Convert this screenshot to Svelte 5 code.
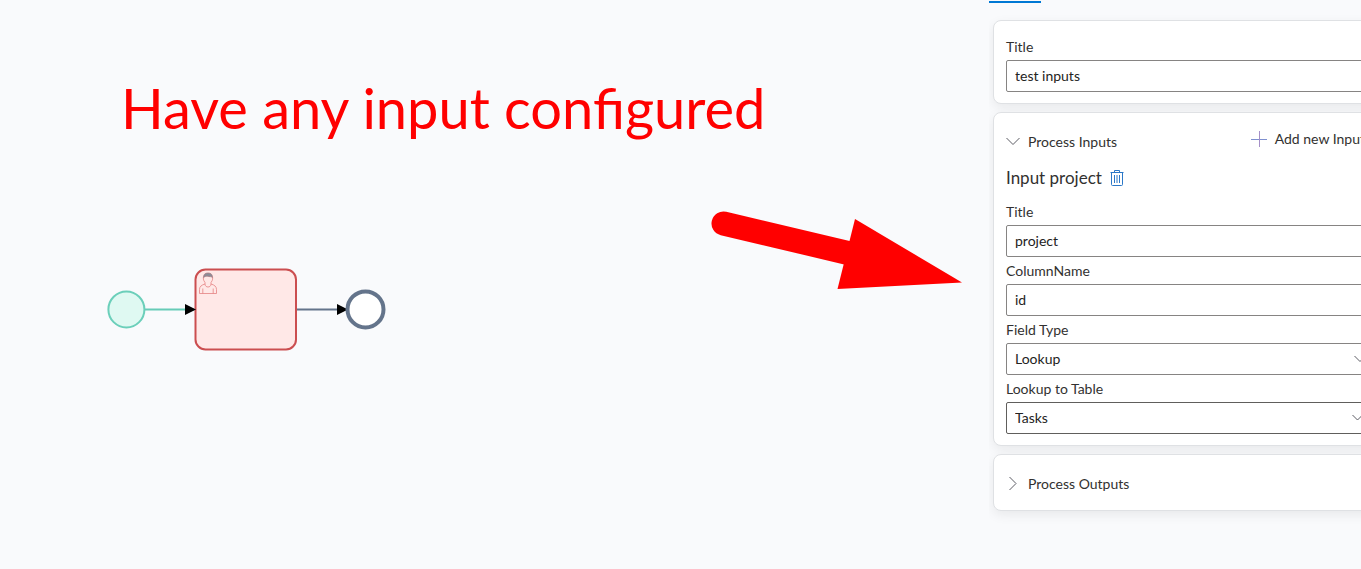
<script>
  let title = $state('test inputs');
  let inputTitle = $state('project');
  let columnName = $state('id');
  let fieldType = $state('Lookup');
  let lookupTable = $state('Tasks');
</script>

<main class="editor">
  <section class="canvas" aria-label="Process diagram">
    <h1 class="note">Have any input configured</h1>

    <svg class="arrow" width="252" height="80" viewBox="0 0 252 80" aria-hidden="true">
      <path d="M13.500 13.500 L140 43.500" stroke="#f00" stroke-width="24" stroke-linecap="round" />
      <path d="M145 9 L252 72.500 L127.500 79 Z" fill="#f00" />
    </svg>

    <svg class="diagram" width="280" height="84" viewBox="0 0 280 84" role="img" aria-label="Start, user task, end">
      <path d="M39 42.500 H88" stroke="#67cbb7" stroke-width="2" />
      <path d="M190 42.500 H240" stroke="#64748b" stroke-width="2" />
      <circle cx="20.400" cy="42.400" r="18" fill="#dff9f2" stroke="#6bcfba" stroke-width="2" />
      <rect x="89.500" y="2.500" width="100.500" height="80" rx="10" fill="#ffe8e7" stroke="#cb4e50" stroke-width="2" />
      <path d="M79 37 L90 42.500 L79 48 Z" fill="#000" />
      <path d="M231 37 L242 42.500 L231 48 Z" fill="#000" />
      <circle cx="259.500" cy="42.400" r="18" fill="#fff" stroke="#64748b" stroke-width="4" />
      <g transform="translate(93 5)" fill="none" stroke="#e58183" stroke-width="0.8">
        <path d="M6 12 C2.500 13 0.500 14.500 0.500 17.500 V21.500 H17.500 V17.500 C17.500 14.500 15.500 13 12 12" />
        <path d="M6 12 V10.500 C4 8 4.200 6 4.600 4.500 M12 12 V10.500 C14 8 13.800 6 13.400 4.500" />
        <path d="M6 12 C6 16 12 16 12 12 M3.800 21.500 V16.500 M14.200 21.500 V16.500" />
        <path d="M4.600 5.500 C4.400 2.500 6 1 9 1 C12 1 13.600 2.500 13.400 5.500 C12 4 10.500 5 9 4.200 C7.500 4 6 4.200 4.600 5.500 Z" fill="#8b8d98" stroke="#a77b84" />
      </g>
    </svg>
  </section>

  <aside class="panel" aria-label="Properties">
    <div class="tabs"></div>
    <div class="cards">
      <section class="card">
        <div class="field">
          <label for="title">Title</label>
          <input id="title" type="text" bind:value={title} />
        </div>
      </section>

      <section class="card">
        <div class="bar">
          <button class="toggle" aria-expanded="true">
            <svg width="14" height="14" viewBox="0 0 14 14" aria-hidden="true"><path d="M0.500 3 L7 9.500 L13.500 3" /></svg>
            <span>Process Inputs</span>
          </button>
          <button class="add">
            <svg width="16" height="16" viewBox="0 0 16 16" aria-hidden="true"><path d="M0 8.500 H16" stroke="#7f90cf" /><path d="M8.500 0 V16" stroke="#a58fc8" /></svg>
            <span>Add new Input</span>
          </button>
        </div>

        <div class="item">
          <h2>Input project</h2>
          <button class="remove" aria-label="Delete input">
            <svg width="14" height="16" viewBox="0 0 14 16" fill="none" stroke="#2b78c8" aria-hidden="true">
              <path d="M0.500 2.500 H13.500 M4.500 2.500 V0.500 H9.500 V2.500 M1.500 2.500 V14.500 Q1.500 15.500 2.500 15.500 H11.500 Q12.500 15.500 12.500 14.500 V2.500" />
              <path d="M4.500 5 V13 M7 5 V13 M9.500 5 V13" />
            </svg>
          </button>
        </div>

        <div class="field">
          <label for="input-title">Title</label>
          <input id="input-title" type="text" bind:value={inputTitle} />
        </div>
        <div class="field">
          <label for="column-name">ColumnName</label>
          <input id="column-name" type="text" bind:value={columnName} />
        </div>
        <div class="field">
          <label for="field-type">Field Type</label>
          <div class="select">
            <select id="field-type" bind:value={fieldType}>
              <option>Lookup</option>
            </select>
            <svg width="12" height="12" viewBox="0 0 12 12" aria-hidden="true"><path d="M0.500 3 L6 8.500 L11.500 3" /></svg>
          </div>
        </div>
        <div class="field">
          <label for="lookup-table">Lookup to Table</label>
          <div class="select combo">
            <select id="lookup-table" bind:value={lookupTable}>
              <option>Tasks</option>
            </select>
            <svg width="12" height="12" viewBox="0 0 12 12" aria-hidden="true"><path d="M0.500 3 L5.500 8 L10.500 3" /></svg>
          </div>
        </div>
      </section>

      <section class="card">
        <div class="bar">
          <button class="toggle" aria-expanded="false">
            <svg width="14" height="14" viewBox="0 0 14 14" aria-hidden="true"><path d="M3.500 0 L10 6.500 L3.500 13" /></svg>
            <span>Process Outputs</span>
          </button>
        </div>
      </section>
    </div>
  </aside>
</main>

<style>
  :global(body) {
    margin: 0;
    background: #f9fafc;
  }

  .editor {
    display: grid;
    grid-template-columns: minmax(0, 1fr) 372px;
    min-height: 100vh;
    overflow: hidden;
    color: #323130;
    font: 14px/20px Lato, sans-serif;
  }

  .editor * {
    box-sizing: border-box;
  }

  .canvas {
    position: relative;
  }

  .note {
    position: absolute;
    left: 121px;
    top: 72px;
    margin: 0;
    color: #f00;
    font-size: 56px;
    font-weight: 400;
    line-height: 72px;
    white-space: nowrap;
  }

  .arrow {
    position: absolute;
    left: 710px;
    top: 210px;
    fill: none;
  }

  .diagram {
    position: absolute;
    left: 106px;
    top: 267px;
  }

  .panel {
    min-width: 0;
    overflow: hidden;
  }

  .tabs {
    width: 52px;
    height: 3px;
    border-bottom: 2px solid #0078d4;
  }

  .cards {
    display: flex;
    flex-direction: column;
    gap: 8px;
    padding: 17px 0 40px 4px;
    margin-right: -24px;
  }

  .card {
    padding: 12px 12px 11px;
    border: 1px solid #dfe1e4;
    border-radius: 8px;
    background: #fff;
    box-shadow: 0 4px 12px rgba(0, 0, 0, 0.07);
  }

  label {
    display: block;
    line-height: 27px;
  }

  input,
  select {
    display: block;
    width: 100%;
    height: 32px;
    padding: 0 8px;
    border: 1px solid #868483;
    border-radius: 2px;
    outline: none;
    appearance: none;
    background: #fff;
    color: #242322;
    font: inherit;
  }

  input {
    padding-bottom: 2px;
  }

  .select {
    position: relative;
  }

  .select svg {
    position: absolute;
    right: 6px;
    top: 10px;
  }

  .combo select {
    border-color: #605e5c;
  }

  .combo svg {
    right: 8px;
  }

  svg {
    flex: none;
  }

  .toggle svg,
  .select svg {
    fill: none;
    stroke: #5d5c64;
  }

  button {
    display: flex;
    align-items: center;
    padding: 0;
    border: 0;
    background: none;
    color: inherit;
    font: inherit;
    white-space: nowrap;
  }

  .bar {
    display: flex;
    justify-content: space-between;
    height: 32px;
  }

  .toggle {
    gap: 8px;
    padding-top: 2px;
  }

  .add {
    gap: 8px;
    padding-bottom: 4px;
    margin-right: 7px;
  }

  .item {
    display: flex;
    align-items: center;
    gap: 8px;
    height: 41px;
  }

  h2 {
    margin: 0;
    font-size: 17px;
    font-weight: 400;
    line-height: 24px;
  }
</style>
